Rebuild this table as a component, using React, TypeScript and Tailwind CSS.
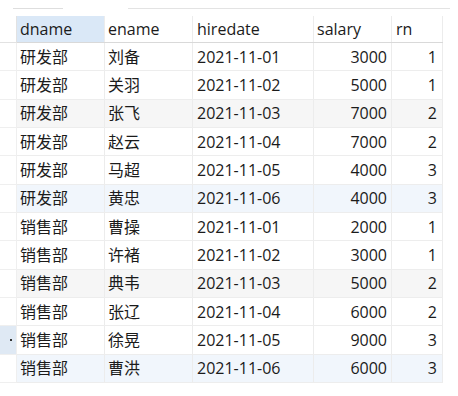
const rows: [string, string, string, number, number][] = [
  ['研发部', '刘备', '2021-11-01', 3000, 1],
  ['研发部', '关羽', '2021-11-02', 5000, 1],
  ['研发部', '张飞', '2021-11-03', 7000, 2],
  ['研发部', '赵云', '2021-11-04', 7000, 2],
  ['研发部', '马超', '2021-11-05', 4000, 3],
  ['研发部', '黄忠', '2021-11-06', 4000, 3],
  ['销售部', '曹操', '2021-11-01', 2000, 1],
  ['销售部', '许褚', '2021-11-02', 3000, 1],
  ['销售部', '典韦', '2021-11-03', 5000, 2],
  ['销售部', '张辽', '2021-11-04', 6000, 2],
  ['销售部', '徐晃', '2021-11-05', 9000, 3],
  ['销售部', '曹洪', '2021-11-06', 6000, 3],
];

// faint tint the grid shows on some rows
const rowBg = (i: number) => {
  if (i === 2 || i === 8) return 'bg-[#f6f6f6]';
  if (i === 5 || i === 11) return 'bg-[#f1f6fc]';
  return 'bg-white';
};

const cols = 'grid grid-cols-[88px_88px_121px_78px_51px]';
const cell = 'border-r border-[#ececec] flex items-center truncate';

export default function App() {
  return (
    <div
      className="w-[458px] h-[396px] bg-white text-[16px] text-[#1b1b1b] overflow-hidden"
      style={{ fontFamily: '"Open Sans", "Noto Sans CJK SC", sans-serif' }}
    >
      <div className="flex pt-2">
        <div className="ml-[13px] w-[50px] h-px bg-[#dedede]" />
        <div className="ml-[65px] w-[322px] h-px bg-[#e3e3e3]" />
      </div>

      <div className="flex mt-[7px]">
        {/* row header gutter, mostly cropped */}
        <div className="w-[17px] flex flex-col">
          <div className="h-[27px] border-b border-r border-[#e2e2e2]" />
          {rows.map((_, i) => (
            <div
              key={i}
              className={`h-[28.33px] border-b border-r border-[#efefef] flex items-center justify-end ${
                i === 10 ? 'bg-[#dfe9f4]' : ''
              }`}
            >
              {i === 10 && <div className="w-[2px] h-[2px] bg-[#333] mr-[4px]" />}
            </div>
          ))}
        </div>

        <div className="w-[426px]">
          <div className={`${cols} h-[27px] border-b border-[#d9d9d9] bg-white`}>
            <div className={`${cell} pl-[3px] bg-[#dae8f7] border-[#e2e2e2]`}>dname</div>
            <div className={`${cell} pl-[3px] border-[#e2e2e2]`}>ename</div>
            <div className={`${cell} pl-[4px] border-[#e2e2e2]`}>hiredate</div>
            <div className={`${cell} pl-[3px] border-[#e2e2e2]`}>salary</div>
            <div className={`${cell} pl-[4px] border-[#e2e2e2]`}>rn</div>
          </div>
          {rows.map((r, i) => (
            <div key={i} className={`${cols} h-[28.33px] border-b border-[#ededed] ${rowBg(i)}`}>
              <div className={`${cell} pl-[3px]`}>{r[0]}</div>
              <div className={`${cell} pl-[3px]`}>{r[1]}</div>
              <div className={`${cell} pl-[4px]`}>{r[2]}</div>
              <div className={`${cell} justify-end pr-[4px]`}>{r[3]}</div>
              <div className={`${cell} justify-end pr-[5px]`}>{r[4]}</div>
            </div>
          ))}
        </div>
      </div>
    </div>
  );
}
